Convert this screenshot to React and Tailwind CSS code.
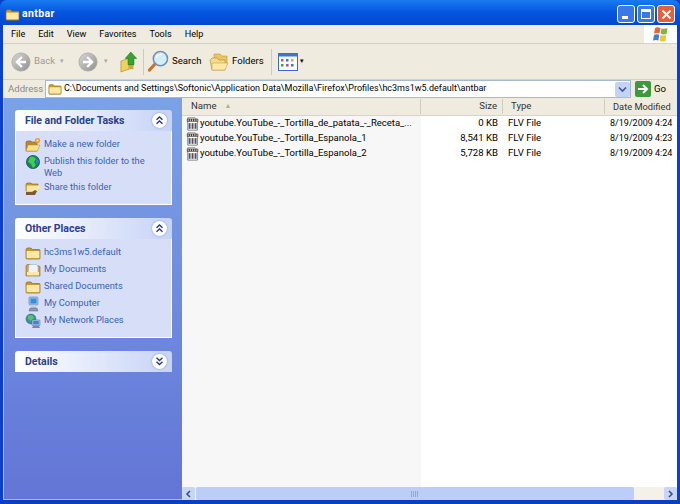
import React from "react";

const menus = ["File", "Edit", "View", "Favorites", "Tools", "Help"];

const files = [
    { name: "youtube.YouTube_-_Tortilla_de_patata_-_Receta_...", size: "0 KB", date: "8/19/2009 4:24" },
    { name: "youtube.YouTube_-_Tortilla_Espanola_1", size: "8,541 KB", date: "8/19/2009 4:23" },
    { name: "youtube.YouTube_-_Tortilla_Espanola_2", size: "5,728 KB", date: "8/19/2009 4:24" },
];

const FolderIcon = ({ size = 16, open = false }) => (
    <svg width={size} height={size} viewBox="0 0 16 16" className="shrink-0">
        <path d="M1 4.5 L2 3 H6 L7.2 4.5 H14 Q15 4.5 15 5.5 V13 Q15 14 14 14 H2 Q1 14 1 13 Z" fill="#c9992f" stroke="#8a6a24" strokeWidth="0.7" />
        {open ? (
            <path d="M3 7 H15.5 L13.5 14 H1.2 Z" fill="#fbe08c" stroke="#b08a35" strokeWidth="0.5" />
        ) : (
            <path d="M1.6 6 H14.4 V13.2 H1.6 Z" fill="#fde9a3" />
        )}
    </svg>
);

const NewFolderIcon = () => (
    <svg width="16" height="16" viewBox="0 0 16 16" className="shrink-0">
        <path d="M1 5 L2 4 H6 L7 5 H12 V14 H1 Z" fill="#b98a2c" stroke="#7d6026" strokeWidth="0.6" />
        <path d="M3 8 H15 L12.5 14 H1 Z" fill="#fbe08c" stroke="#b08a35" strokeWidth="0.5" />
        <circle cx="12.5" cy="3.5" r="2.6" fill="#f39a2b" />
        <circle cx="12.5" cy="3.5" r="1.1" fill="#ffe9a8" />
    </svg>
);

const GlobeIcon = () => (
    <svg width="16" height="16" viewBox="0 0 16 16" className="shrink-0">
        <circle cx="8" cy="8" r="6.6" fill="#1f7f5a" stroke="#184a63" strokeWidth="0.7" />
        <path d="M5 3 Q9 2 11 5 L9 8 L11 11 L8 14 L6 10 L3 8 Z" fill="#3fcf4f" />
        <path d="M11 5 L14 7 L13 10 L11 9 Z" fill="#2f7fd8" />
    </svg>
);

const ShareIcon = () => (
    <svg width="16" height="16" viewBox="0 0 16 16" className="shrink-0">
        <path d="M1 4 L2 3 H6 L7 4 H13 V11 H1 Z" fill="#c9992f" stroke="#7d6026" strokeWidth="0.6" />
        <path d="M1.6 5.5 H14.4 L13.4 11.5 H1.6 Z" fill="#fde9a3" />
        <path d="M1 12 H7 L10 10 L12 11 L10 15 H1 Z" fill="#7a5a34" />
    </svg>
);

const DocsIcon = () => (
    <svg width="16" height="16" viewBox="0 0 16 16" className="shrink-0">
        <path d="M1 4 L2 2.5 H6 L7 4 H14 Q15 4 15 5 V14 H1 Z" fill="#d6a63c" stroke="#8a6a24" strokeWidth="0.6" />
        <path d="M4 2.5 H11.5 L13 4.5 V12 H3 Z" fill="#eef3fb" stroke="#8fa6c8" strokeWidth="0.5" />
        <path d="M2 10 H14 V13.4 H2 Z" fill="#fde9a3" />
    </svg>
);

const ComputerIcon = () => (
    <svg width="16" height="16" viewBox="0 0 16 16" className="shrink-0">
        <rect x="4" y="1" width="9" height="8" rx="1" fill="#9fc0ec" stroke="#6a7fa8" strokeWidth="0.6" />
        <rect x="5.5" y="2.5" width="6" height="5" fill="#2f8fe0" />
        <path d="M6 9 H11 V12 H6 Z" fill="#c3cfdf" />
        <path d="M5 12 H12 L13 15 H4 Z" fill="#8e97ad" stroke="#4a5878" strokeWidth="0.4" />
    </svg>
);

const NetworkIcon = () => (
    <svg width="16" height="16" viewBox="0 0 16 16" className="shrink-0">
        <circle cx="6" cy="6" r="5" fill="#3a8fa8" stroke="#28607a" strokeWidth="0.5" />
        <path d="M3 3 L7 2 L9 5 L6 8 L3 6 Z" fill="#58c46a" />
        <rect x="7" y="7" width="8" height="5.5" rx="0.6" fill="#a9c6ee" stroke="#4a6288" strokeWidth="0.5" />
        <rect x="8.2" y="8" width="5.6" height="3.4" fill="#3a86d8" />
        <path d="M8 13 H14 L15 15 H7 Z" fill="#7a859e" />
    </svg>
);

const FlvIcon = () => (
    <svg width="14" height="14" viewBox="0 0 16 16" className="shrink-0">
        <path d="M2 1 H10.5 L13 3.5 V15 H2 Z" fill="#fff" stroke="#555" strokeWidth="0.8" />
        <rect x="1" y="2" width="13" height="3.4" fill="#4a4038" />
        <path d="M2.5 2.6 V4.8 M5 2.6 V4.8 M7.5 2.6 V4.8 M10 2.6 V4.8 M12.5 2.6 V4.8" stroke="#e8e2d4" strokeWidth="1" />
        <rect x="3" y="7" width="2.2" height="6.5" fill="#3d5a80" />
        <rect x="6.4" y="7" width="2.2" height="6.5" fill="#6a4a3a" />
        <rect x="9.8" y="7" width="2.2" height="6.5" fill="#3d5a80" />
    </svg>
);

const NavCircle = ({ flip = false }) => (
    <svg width="20" height="20" viewBox="0 0 22 22" className="shrink-0">
        <defs>
            <linearGradient id="navGrey" x1="0" y1="0" x2="1" y2="1">
                <stop offset="0" stopColor="#d8d8d6" />
                <stop offset="1" stopColor="#8f8f8d" />
            </linearGradient>
        </defs>
        <circle cx="11" cy="11" r="10" fill="url(#navGrey)" stroke="#a4a4a0" strokeWidth="0.8" />
        <g transform={flip ? "rotate(180 11 11)" : undefined}>
            <path d="M12 5.5 L6.5 11 L12 16.5 M7 11 H16.5" fill="none" stroke="#fff" strokeWidth="2.6" />
        </g>
    </svg>
);

const UpIcon = () => (
    <svg width="18" height="22" viewBox="0 0 20 24" className="shrink-0">
        <path d="M1 11 L10 8 V20 L1 23 Z" fill="#f3cf62" stroke="#9a7a2a" strokeWidth="0.6" />
        <path d="M10 8 L15 10 V20 L10 20 Z" fill="#cfa63c" />
        <path d="M12 1 L18.5 8 H15.5 V15 H9 V8 H5.8 Z" fill="#35a52f" stroke="#1f6b1f" strokeWidth="0.6" />
    </svg>
);

const SearchIcon = () => (
    <svg width="23" height="23" viewBox="0 0 24 24" className="shrink-0">
        <path d="M9 14 L2.5 21" stroke="#c8752c" strokeWidth="3.2" strokeLinecap="round" />
        <circle cx="14" cy="9" r="7.4" fill="#d5ecfa" stroke="#6c93bd" strokeWidth="1.6" />
        <path d="M9.5 8 Q11 4.5 15 4.5" fill="none" stroke="#fff" strokeWidth="1.4" />
    </svg>
);

const FoldersIcon = () => (
    <svg width="20" height="20" viewBox="0 0 20 20" className="shrink-0">
        <path d="M5 2 H11 L13 4 H18 V13 H5 Z" fill="#e9c566" stroke="#a98a3a" strokeWidth="0.5" />
        <path d="M1 8 L3 6 H8 L10 8 H16 V18 H3 Z" fill="#f7dc88" stroke="#a98a3a" strokeWidth="0.6" />
        <path d="M3 11 H19 L16 18 H3 Z" fill="#fde9a3" stroke="#b8963e" strokeWidth="0.5" />
    </svg>
);

const ViewsIcon = () => (
    <svg width="20" height="20" viewBox="0 0 20 20" className="shrink-0">
        <rect x="0.5" y="1.5" width="19" height="17" fill="#f8fbff" stroke="#3c6fae" />
        <rect x="0.5" y="1.5" width="19" height="3" fill="#3c78c8" />
        <rect x="3" y="7" width="2.5" height="2.5" fill="#d25a4a" />
        <rect x="8" y="7" width="2.5" height="2.5" fill="#3c78c8" />
        <rect x="13" y="7" width="2.5" height="2.5" fill="#e0a832" />
        <rect x="3" y="12" width="2.5" height="2.5" fill="#46a046" />
        <rect x="8" y="12" width="2.5" height="2.5" fill="#b04ab0" />
        <rect x="13" y="12" width="2.5" height="2.5" fill="#3c78c8" />
    </svg>
);

const WinFlag = () => (
    <svg width="18" height="17" viewBox="0 0 18 17">
        <path d="M3 2 Q6 0.5 8.5 2 L7.5 7.5 Q5 6.5 2 7.5 Z" fill="#e8663a" />
        <path d="M9.5 2.2 Q12.5 3.5 15.5 2 L14.5 8 Q11.5 9 8.7 7.8 Z" fill="#7fb83c" />
        <path d="M2 8.7 Q5 7.7 7.3 8.7 L6.4 14.5 Q4 13.5 1 14.5 Z" fill="#3f7fd8" />
        <path d="M8.5 9 Q11.5 10 14.3 9 L13.4 15 Q10.5 16 7.6 14.8 Z" fill="#f2c23a" />
    </svg>
);

const Chevrons = ({ down = false }) => (
    <div className="flex h-[15px] w-[15px] items-center justify-center rounded-full bg-white shadow-[0_0_2px_#7f8fc8]">
        <svg width="9" height="9" viewBox="0 0 9 9">
            <path
                d={down ? "M1.5 0.8 L4.5 3.6 L7.5 0.8 M1.5 4.8 L4.5 7.6 L7.5 4.8" : "M1.5 3.8 L4.5 1 L7.5 3.8 M1.5 7.8 L4.5 5 L7.5 7.8"}
                fill="none"
                stroke="#26398f"
                strokeWidth="1.4"
            />
        </svg>
    </div>
);

const Panel = ({ title, items, down = false }) => (
    <div className="w-[157px]">
        <div className="flex h-[21px] items-center justify-between rounded-t-[3px] bg-gradient-to-r from-white to-[#c6d3f7] pl-[10px] pr-[5px]">
            <span className="text-[10.5px] font-bold text-[#2a3f8f]">{title}</span>
            <Chevrons down={down} />
        </div>
        {items && (
            <div className="flex flex-col gap-[1px] border border-t-0 border-white bg-[#d6dff7] px-[9px] pb-[8px] pt-[6px]">
                {items.map(([Icon, label]) => (
                    <div key={label} className="flex min-h-[16px] items-start gap-[3px]">
                        <Icon />
                        <span className="pt-[1px] text-[9.3px] leading-[12px] text-[#3a62b8]">{label}</span>
                    </div>
                ))}
            </div>
        )}
    </div>
);

function App() {
    return (
        <div className="flex h-[504px] w-[680px] flex-col overflow-hidden bg-[#0a3fd0] font-['Roboto',sans-serif] text-[9.6px] text-black">
            {/* title bar */}
            <div className="flex h-[25px] items-center rounded-t-[7px] bg-gradient-to-b from-[#1a7bf0] via-[#0555e0] to-[#0348d0] pl-[5px] pr-[5px] pt-[3px]">
                <FolderIcon size={15} />
                <span className="ml-[2px] text-[10.5px] font-bold tracking-[0.4px] text-white">antbar</span>
                <div className="ml-auto flex gap-[2px]">
                    <div className="flex h-[18px] w-[18px] items-end rounded-[3px] border border-white bg-[#3a78e8] pb-[3px] pl-[4px]">
                        <div className="h-[3px] w-[6px] bg-white" />
                    </div>
                    <div className="flex h-[18px] w-[18px] items-center justify-center rounded-[3px] border border-white bg-[#3a78e8]">
                        <div className="h-[10px] w-[10px] border border-t-[3px] border-white" />
                    </div>
                    <div className="flex h-[18px] w-[18px] items-center justify-center rounded-[3px] border border-white bg-[#e2603a]">
                        <svg width="11" height="11" viewBox="0 0 11 11">
                            <path d="M1.5 1.5 L9.5 9.5 M9.5 1.5 L1.5 9.5" stroke="#fff" strokeWidth="2" />
                        </svg>
                    </div>
                </div>
            </div>

            <div className="mx-[3px] flex flex-1 flex-col bg-[#ece9d8]">
                {/* menu */}
                <div className="flex h-[19px] items-center border-b border-[#d8d2bd] bg-[#efecdf]">
                    <div className="flex gap-[13px] pl-[8px] pt-[1px] text-[9.1px]">
                        {menus.map((m) => (
                            <span key={m}>{m}</span>
                        ))}
                    </div>
                    <div className="ml-auto flex h-full w-[33px] items-center justify-center bg-white">
                        <WinFlag />
                    </div>
                </div>

                {/* toolbar */}
                <div className="flex h-[36px] items-center border-b border-[#d8d2bd] bg-[#efecdf] pl-[8px]">
                    <NavCircle />
                    <span className="ml-[3px] w-[20px] text-[#9a9a96]">Back</span>
                    <span className="ml-[6px] text-[7px] text-[#a8a8a4]">▾</span>
                    <div className="ml-[14px]"><NavCircle flip /></div>
                    <span className="ml-[6px] text-[7px] text-[#a8a8a4]">▾</span>
                    <div className="ml-[12px]"><UpIcon /></div>
                    <div className="ml-[5px] h-[26px] w-px bg-[#cfcbb8]" />
                    <div className="ml-[3px]"><SearchIcon /></div>
                    <span className="ml-[2px] w-[28px]">Search</span>
                    <div className="ml-[9px]"><FoldersIcon /></div>
                    <span className="ml-[3px] w-[30px]">Folders</span>
                    <div className="ml-[9px] h-[26px] w-px bg-[#cfcbb8]" />
                    <div className="ml-[6px]"><ViewsIcon /></div>
                    <span className="ml-[2px] text-[7px]">▾</span>
                </div>

                {/* address */}
                <div className="flex h-[18px] items-center bg-[#efecdf] pl-[5px]">
                    <span className="w-[37px] text-[#8a8a84]">Address</span>
                    <div className="flex h-[18px] flex-1 items-center border border-[#a8b8d0] bg-white pl-[2px]">
                        <FolderIcon size={14} />
                        <span className="ml-[2px] whitespace-nowrap text-[9px]">C:\Documents and Settings\Softonic\Application Data\Mozilla\Firefox\Profiles\hc3ms1w5.default\antbar</span>
                        <div className="ml-auto flex h-[15px] w-[15px] items-center justify-center rounded-[2px] bg-[#c3d3f5]">
                            <svg width="9" height="7" viewBox="0 0 9 7">
                                <path d="M1 1.5 L4.5 5 L8 1.5" fill="none" stroke="#3b5a9a" strokeWidth="1.6" />
                            </svg>
                        </div>
                    </div>
                    <div className="ml-[4px] flex h-[16px] w-[16px] items-center justify-center rounded-[2px] bg-[#3a9a3c]">
                        <svg width="12" height="12" viewBox="0 0 12 12">
                            <path d="M1 6 H9 M6 2 L10 6 L6 10" fill="none" stroke="#fff" strokeWidth="2" />
                        </svg>
                    </div>
                    <span className="ml-[3px] w-[23px]">Go</span>
                </div>

                {/* main */}
                <div className="flex flex-1 overflow-hidden">
                    <aside className="flex w-[179px] shrink-0 flex-col gap-[13px] border-b border-l border-[#a9bcf0] bg-gradient-to-b from-[#7ba2e7] to-[#6375d6] pl-[11px] pt-[12px]">
                        <Panel
                            title="File and Folder Tasks"
                            items={[
                                [NewFolderIcon, "Make a new folder"],
                                [GlobeIcon, "Publish this folder to the Web"],
                                [ShareIcon, "Share this folder"],
                            ]}
                        />
                        <Panel
                            title="Other Places"
                            items={[
                                [FolderIcon, "hc3ms1w5.default"],
                                [DocsIcon, "My Documents"],
                                [FolderIcon, "Shared Documents"],
                                [ComputerIcon, "My Computer"],
                                [NetworkIcon, "My Network Places"],
                            ]}
                        />
                        <Panel title="Details" down />
                    </aside>

                    <div className="flex min-w-0 flex-1 flex-col bg-white">
                        <div className="flex h-[18px] items-center border-b border-[#d8d5c4] bg-[#efecdf] text-[#333]">
                            <div className="flex w-[239px] items-center border-r border-[#cfccba] pl-[9px]">
                                Name<span className="ml-[8px] text-[7px] text-[#b0ad9c]">▲</span>
                            </div>
                            <div className="w-[82px] border-r border-[#cfccba] pr-[5px] text-right">Size</div>
                            <div className="w-[102px] border-r border-[#cfccba] pl-[8px]">Type</div>
                            <div className="pl-[8px] text-[9.3px]">Date Modified</div>
                        </div>
                        <div className="flex flex-1">
                            <div className="w-[239px] bg-[#f7f7f7] pl-[4px]">
                                {files.map((f) => (
                                    <div key={f.name} className="flex h-[15px] items-center whitespace-nowrap">
                                        <FlvIcon />
                                        <span className="text-[9.5px]">{f.name}</span>
                                    </div>
                                ))}
                            </div>
                            <div className="flex-1 overflow-hidden">
                                {files.map((f) => (
                                    <div key={f.name} className="flex h-[15px] items-center whitespace-nowrap">
                                        <div className="w-[77px] text-right">{f.size}</div>
                                        <div className="w-[102px] pl-[10px]">FLV File</div>
                                        <div className="pl-[10px] text-[9px]">{f.date}</div>
                                    </div>
                                ))}
                            </div>
                        </div>
                        {/* horizontal scrollbar */}
                        <div className="flex h-[13px] items-center bg-[#f3f1e8]">
                            <div className="flex h-[13px] w-[13px] items-center justify-center rounded-[2px] bg-[#c8d6f6]">
                                <svg width="7" height="8" viewBox="0 0 7 8"><path d="M5 1 L2 4 L5 7" fill="none" stroke="#3b4f80" strokeWidth="1.6" /></svg>
                            </div>
                            <div className="ml-[1px] flex h-[13px] w-[438px] items-center justify-center rounded-[2px] bg-[#bccdf8]">
                                <div className="h-[6px] w-[8px] bg-[repeating-linear-gradient(90deg,#8fa6e0_0_1px,transparent_1px_2px)]" />
                            </div>
                            <div className="flex-1" />
                            <div className="flex h-[13px] w-[13px] items-center justify-center rounded-[2px] bg-[#c8d6f6]">
                                <svg width="7" height="8" viewBox="0 0 7 8"><path d="M2 1 L5 4 L2 7" fill="none" stroke="#3b4f80" strokeWidth="1.6" /></svg>
                            </div>
                        </div>
                    </div>
                </div>
            </div>
            <div className="h-[4px] bg-[#0a3fc0]" />
        </div>
    );
}

export default App;
